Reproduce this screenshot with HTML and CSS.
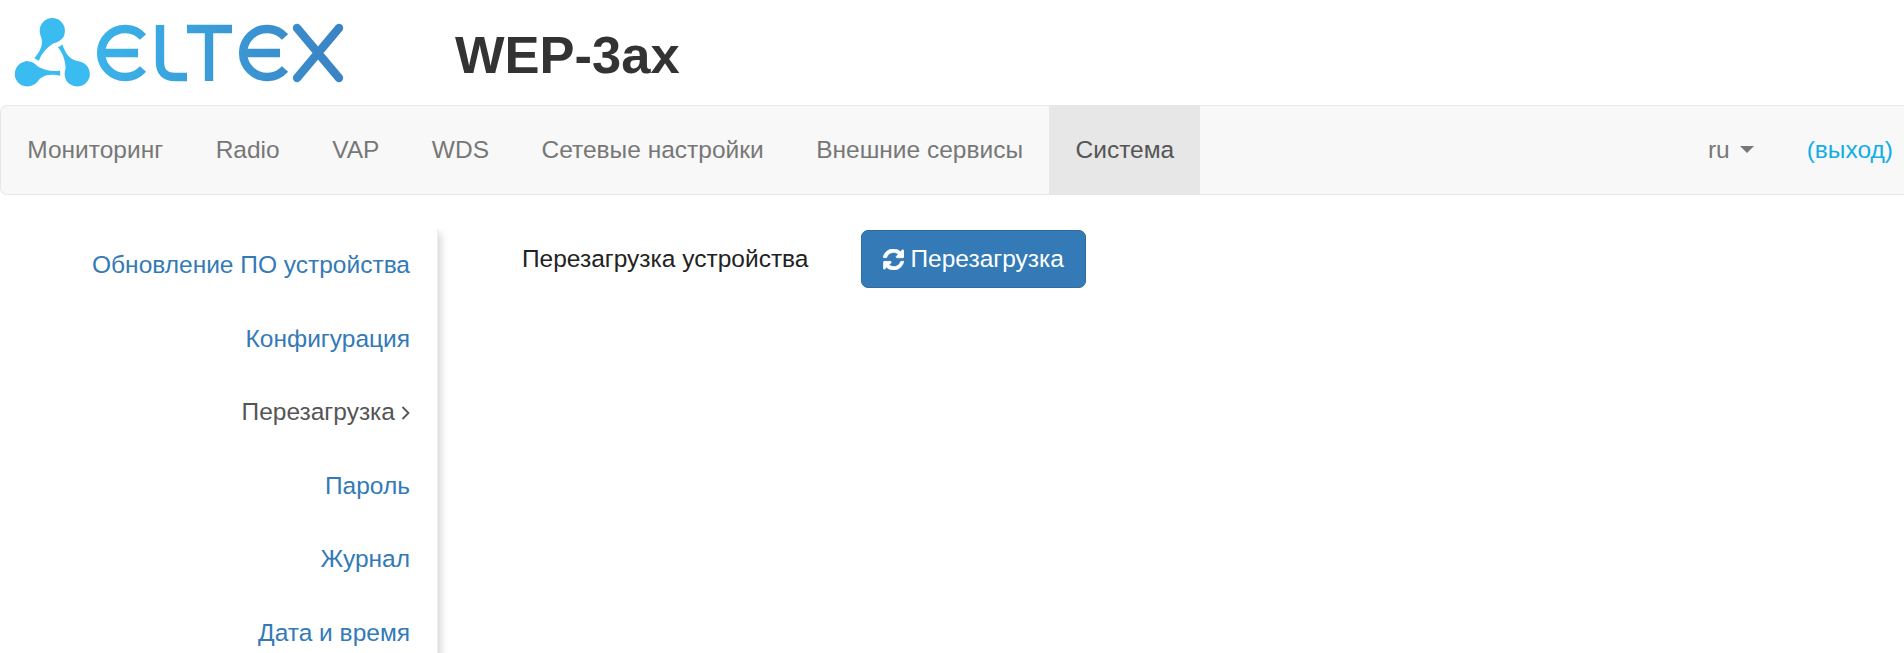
FILE: index.html
```html
<!DOCTYPE html>
<html lang="ru">
<head>
<meta charset="utf-8">
<title>WEP-3ax</title>
<link rel="stylesheet" href="styles.css">
</head>
<body>
<header class="header">
  <svg class="logo" width="360" height="105" viewBox="0 0 360 105" aria-label="ELTEX">
    <defs>
      <linearGradient id="lg" gradientUnits="userSpaceOnUse" x1="90" y1="0" x2="345" y2="0">
        <stop offset="0" stop-color="#3bb4ea"/>
        <stop offset="1" stop-color="#3a82c4"/>
      </linearGradient>
      <g id="blob">
        <circle cx="52.3" cy="30.7" r="12.6"/>
        <path d="M40.5 35C42.5 41 44 47 34.3 58.3L39 60.7C41 54 47 47 55 42.5C58 41 62 39.5 64.5 35Z"/>
      </g>
    </defs>
    <g fill="#3bbcf0">
      <use href="#blob"/>
      <use href="#blob" transform="rotate(120 52.3 59.5)"/>
      <use href="#blob" transform="rotate(240 52.3 59.5)"/>
    </g>
    <g fill="none" stroke="url(#lg)" stroke-width="8.4">
      <path d="M143 37A24 24 0 1 0 143 69"/>
      <path d="M103 53H138"/>
      <path d="M160 25V62Q160 77 175 77H187"/>
      <path d="M187 29H232"/>
      <path d="M209 29V81"/>
      <path d="M285 37A24 24 0 1 0 285 69"/>
      <path d="M245 53H280"/>
      <path d="M297 28L339 78M339 28L297 78" stroke-linecap="round"/>
    </g>
  </svg>
  <h1 class="title">WEP-3ax</h1>
</header>
<nav class="navbar">
  <ul class="nav-list">
    <li class="nav-item">Мониторинг</li>
    <li class="nav-item">Radio</li>
    <li class="nav-item">VAP</li>
    <li class="nav-item">WDS</li>
    <li class="nav-item">Сетевые настройки</li>
    <li class="nav-item">Внешние сервисы</li>
    <li class="nav-item nav-item-active">Система</li>
  </ul>
  <div class="nav-right">
    <span class="lang">ru<span class="caret"></span></span>
    <a class="logout">(выход)</a>
  </div>
</nav>
<div class="main">
  <aside class="sidebar">
    <a class="side-link">Обновление ПО устройства</a>
    <a class="side-link">Конфигурация</a>
    <span class="side-link side-link-active">Перезагрузка
      <svg class="chevron" width="10" height="16" viewBox="0 0 10 16"><path d="M2.500 2L8.500 8L2.500 14" fill="none" stroke="#555" stroke-width="1.800"/></svg>
    </span>
    <a class="side-link">Пароль</a>
    <a class="side-link">Журнал</a>
    <a class="side-link">Дата и время</a>
  </aside>
  <section class="content">
    <span class="label">Перезагрузка устройства</span>
    <button class="btn" type="button">
      <svg class="refresh" width="21" height="21" viewBox="0 0 1536 1536"><path fill="#fff" stroke="#fff" stroke-width="50" d="M1511 928c0 3.3-.3 5.700-1 7-42.700 179-132.200 324-268.500 435.500S943 1536 768 1536c-93.300 0-183.500-17.500-270.500-52.500S333 1398 264 1332l-129 129c-12.700 12.700-27.700 19-45 19s-32.300-6.300-45-19-19-27.700-19-45V968c0-17.300 6.300-32.300 19-45s27.700-19 45-19h448c17.300 0 32.300 6.300 45 19s19 27.700 19 45-6.300 32.300-19 45l-137 137c47.300 44 101 78 161 102s122.300 36 187 36c89.300 0 172.700-21.700 250-65s139.300-103 186-179c7.300-11.300 25-50.300 53-117 5.300-15.300 15.300-23 30-23h192c8.700 0 16.200 3.200 22.500 9.500s9.500 13.800 9.500 22.500zm25-800v448c0 17.300-6.300 32.300-19 45s-27.700 19-45 19h-448c-17.300 0-32.300-6.300-45-19s-19-27.700-19-45 6.300-32.300 19-45l138-138C1019 294 904 248 768 248c-89.300 0-172.700 21.700-250 65S378.700 416 332 492c-7.300 11.300-25 50.300-53 117-5.300 15.300-15.300 23-30 23H50c-8.700 0-16.200-3.200-22.500-9.500S18 608.700 18 600v-7c43.300-179 133.300-324 270-435S593 0 768 0c93.300 0 184 17.700 272 53s166.200 85 234.500 149l130-129c12.700-12.700 27.700-19 45-19s32.300 6.300 45 19 19 27.700 19 45z"/></svg>
      Перезагрузка
    </button>
  </section>
</div>
</body>
</html>
```
FILE: styles.css
```css
* { box-sizing: border-box; }
html, body { height: 653px; }
body {
  margin: 0;
  overflow: hidden;
  background: #fff;
  color: #333;
  font-family: "Liberation Sans", Arial, sans-serif;
  font-size: 24.5px;
  line-height: 1.42857;
}
.header {
  height: 105px;
  display: flex;
  align-items: center;
}
.logo { flex: none; display: block; }
.title {
  margin: 5px 0 0 95px;
  font-size: 52.5px;
  font-weight: 700;
  line-height: 1.1;
  color: #333;
}
.navbar {
  height: 90px;
  display: flex;
  justify-content: space-between;
  background: #f8f8f8;
  border: 1px solid #e7e7e7;
  border-right: 0;
  border-radius: 7px 0 0 7px;
}
.nav-list {
  display: flex;
  list-style: none;
  margin: 0;
  padding: 0;
}
.nav-item {
  display: flex;
  align-items: center;
  padding: 0 26.25px;
  color: #777;
}
.nav-item-active {
  background: #e7e7e7;
  color: #555;
}
.nav-right {
  display: flex;
  align-items: center;
  gap: 53px;
  padding-right: 11px;
}
.lang { color: #777; display: flex; align-items: center; }
.caret {
  width: 0;
  height: 0;
  margin-left: 10px;
  border-top: 7px solid #777;
  border-left: 7px solid transparent;
  border-right: 7px solid transparent;
}
.logout { color: #13aee8; }
.main {
  display: flex;
  padding-top: 34px;
}
.sidebar {
  flex: none;
  width: 438px;
  height: 500px;
  display: flex;
  flex-direction: column;
  align-items: flex-end;
  padding-right: 27px;
  border-right: 1px solid #eee;
  clip-path: inset(0 -20px 0 0);
  box-shadow: 7px 0 8px -4px rgba(0, 0, 0, 0.16);
}
.side-link {
  height: 73.5px;
  display: flex;
  align-items: center;
  gap: 5px;
  color: #337ab7;
}
.side-link-active { color: #555; }
.chevron { flex: none; }
.content {
  flex: 1;
  display: flex;
  align-items: flex-start;
  gap: 52px;
  padding: 1px 0 0 84px;
}
.label {
  color: #222;
  line-height: 58px;
}
.btn {
  display: inline-flex;
  align-items: center;
  gap: 7px;
  height: 58px;
  padding: 0 21px;
  background: #337ab7;
  border: 1px solid #2e6da4;
  border-radius: 7px;
  color: #fff;
  font: inherit;
}
.refresh { flex: none; }
```
